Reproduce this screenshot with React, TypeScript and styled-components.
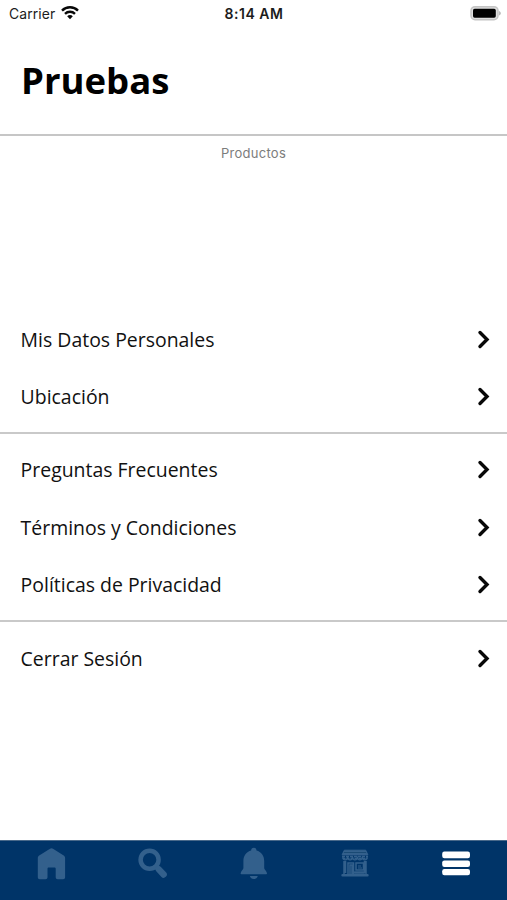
import React from "react";
import styled, { createGlobalStyle } from "styled-components";

const GlobalStyle = createGlobalStyle`
  *, *::before, *::after { box-sizing: border-box; }
  body { margin: 0; background: #fff; }
  button { border: 0; background: none; padding: 0; margin: 0; font: inherit; color: inherit; }
  svg { display: block; }
`;

const Screen = styled.div`
  width: 100%;
  height: 900px;
  display: flex;
  flex-direction: column;
  background: #fff;
  color: #111;
  font-family: "Open Sans", "Noto Sans", sans-serif;
  overflow: hidden;
`;

const StatusBar = styled.div`
  height: 26px;
  flex: none;
  display: grid;
  grid-template-columns: 1fr auto 1fr;
  align-items: center;
  padding: 0 6px 0 9px;
  font-family: Inter, sans-serif;
  color: #1c1c1c;
`;

const Carrier = styled.div`
  display: flex;
  align-items: center;
  gap: 6px;
  padding-top: 2px;
  font-size: 13.9px;
  letter-spacing: 0.1px;

  svg { margin-bottom: 2px; }
`;

const Clock = styled.div`
  font-size: 14px;
  font-weight: 600;
  letter-spacing: 0.5px;
  padding-right: 2px;
`;

const Battery = styled.div`
  justify-self: end;
`;

const Header = styled.header`
  flex: none;
  height: 110px;
  padding: 28px 21px 0;
  border-bottom: 2px solid #c6c6c6;
`;

const Title = styled.h1`
  margin: 0;
  font-size: 36.5px;
  line-height: 53px;
  font-weight: 700;
  color: #000;
`;

const Products = styled.section`
  flex: none;
  height: 175px;
  padding-top: 7px;
  text-align: center;
  font-family: Inter, sans-serif;
  font-size: 13px;
  line-height: 20px;
  letter-spacing: 0.28px;
  color: #7c7c7c;
`;

const Group = styled.section<{ $last?: boolean }>`
  flex: none;
  border-bottom: ${(p) => (p.$last ? "0" : "2px solid #c9c9c9")};
  padding-bottom: 6.5px;
  & + & { padding-top: 7.5px; }
`;

const Row = styled.button`
  width: 100%;
  height: 57.4px;
  padding: 0 15.5px 0 20.6px;
  display: flex;
  align-items: center;
  justify-content: space-between;
  text-align: left;
`;

const RowLabel = styled.span`
  font-size: 19.45px;
  line-height: 28px;
`;

const TabBar = styled.nav`
  flex: none;
  height: 60px;
  margin-top: auto;
  display: grid;
  grid-template-columns: repeat(5, 1fr);
  background: #003468;
  border-top: 1px solid #49698a;
`;

const Tab = styled.button<{ $active?: boolean }>`
  display: flex;
  justify-content: center;
  align-items: flex-start;
  padding: 6px 0 0;
  color: ${(p) => (p.$active ? "#fff" : "#33608c")};
`;

const Chevron = () => (
  <svg width="18" height="22" viewBox="0 0 18 22" fill="none">
    <path d="m6 3.5 7 7-7 7" stroke="#080808" strokeWidth="3.4" strokeLinecap="round" />
  </svg>
);

const WifiIcon = () => (
  <svg width="18" height="14" viewBox="0 0 18 14" fill="none" stroke="#080808" strokeWidth="2.4">
    <path d="M1 4.6C5.4.2 12.6.2 17 4.6M4 7.8c2.8-2.7 7.2-2.7 10 0" />
    <path d="M6.2 10.2c1.6-1.5 4-1.5 5.6 0L9 13.2Z" fill="#080808" stroke="none" />
  </svg>
);

const BatteryIcon = () => (
  <svg width="31" height="16" viewBox="0 0 31 16">
    <rect x="1" y="1.7" width="27" height="13" rx="4" fill="#dedede" stroke="#c4c4c4" strokeWidth="1.5" />
    <rect x="3" y="3.8" width="22.8" height="8.9" rx="1.6" fill="#000" />
    <path d="M29.2 5.9c2 1 2 3.6 0 4.6Z" fill="#aaa" />
  </svg>
);

const HomeIcon = () => (
  <svg width="30" height="34" viewBox="0 0 30 34" fill="currentColor">
    <path d="M15.5 1.2c.6 0 1 .2 1.5.5l10.3 6.5c1.2.7 1.8 1.5 1.8 2.8v19.2c0 1.2-.8 2-2 2h-5.4c-1.2 0-2-.8-2-2v-8.4c0-.8-.5-1.3-1.3-1.3h-5.6c-.8 0-1.3.5-1.3 1.3v8.4c0 1.2-.8 2-2 2H3.8c-1.2 0-2-.8-2-2V11c0-1.3.6-2.1 1.8-2.8L14 1.7c.5-.3.9-.5 1.5-.5Z" />
  </svg>
);

const SearchIcon = () => (
  <svg width="30" height="34" viewBox="0 0 30 34" fill="none" stroke="currentColor">
    <circle cx="12.6" cy="12.8" r="9" strokeWidth="4.5" />
    <path d="m19 19.5 3 3" strokeWidth="5" />
    <path d="m21.8 22.3 4.8 5.2" strokeWidth="6.4" strokeLinecap="round" />
  </svg>
);

const BellIcon = () => (
  <svg width="30" height="34" viewBox="0 0 30 34" fill="currentColor">
    <g transform="translate(.8 0)">
      <path d="M15 .8c1.7 0 2.7 1.1 2.7 2.8 4.7 1.3 7.7 5.2 7.7 10.4v7.2c0 1.4 2.8 3.2 2.8 5.2 0 .5-.3.8-.8.8H2.6c-.5 0-.8-.3-.8-.8 0-2 2.8-3.8 2.8-5.2V14c0-5.2 3-9.1 7.7-10.4C12.3 1.9 13.3.8 15 .8Z" />
      <path d="M11 29h8c-.6 1.8-2 3.1-4 3.1s-3.4-1.3-4-3.1Z" />
    </g>
  </svg>
);

const StoreIcon = () => (
  <svg width="30" height="34" viewBox="0 0 30 34" fill="none" stroke="currentColor">
    <path d="M4.3 3.2h21.4l2.2 4.7H2.1Z" fill="currentColor" />
    <path d="M4 5.5h22" stroke="#14456f" strokeWidth=".8" />
    <path d="M2 9.5h26M2.5 11.5h25" strokeWidth="1.3" strokeDasharray="3 1" />
    <path d="M2.8 9.5c0 4.5 4.8 4.5 4.8 0 0 4.5 4.9 4.5 4.9 0 0 4.5 4.9 4.5 4.9 0 0 4.5 4.9 4.5 4.9 0 0 4.5 4.9 4.5 4.9 0" strokeWidth="1.2" />
    <path d="M4 14v13M26 14v13M5.5 14v12M24.5 14v12M8 27V16h5.5v11M10 27v-9h2v9M16 16h7.5v7H16Z" strokeWidth="1.5" />
    <path d="M18 19h3M18 21h4" strokeWidth="1" />
    <path d="M2.5 28.3h25M15 25.5h9" strokeWidth="2.4" strokeLinecap="round" />
  </svg>
);

const MenuIcon = () => (
  <svg width="30" height="34" viewBox="0 0 30 34" fill="currentColor">
    <rect x="1.2" y="4.5" width="27.8" height="6.7" rx="2.2" />
    <rect x="1.2" y="13.4" width="27.8" height="6.5" rx="2.2" />
    <rect x="1.2" y="22" width="27.8" height="6.3" rx="2.2" />
  </svg>
);

const groups = [
  ["Mis Datos Personales", "Ubicación"],
  ["Preguntas Frecuentes", "Términos y Condiciones", "Políticas de Privacidad"],
  ["Cerrar Sesión"],
];

const tabs = [
  { name: "Inicio", Icon: HomeIcon },
  { name: "Buscar", Icon: SearchIcon },
  { name: "Notificaciones", Icon: BellIcon },
  { name: "Tienda", Icon: StoreIcon },
  { name: "Menú", Icon: MenuIcon },
];

export default function App() {
  return (
    <>
      <GlobalStyle />
      <Screen>
        <StatusBar>
          <Carrier>Carrier <WifiIcon /></Carrier>
          <Clock>8:14 AM</Clock>
          <Battery><BatteryIcon /></Battery>
        </StatusBar>
        <Header><Title>Pruebas</Title></Header>
        <Products>Productos</Products>
        {groups.map((items, i) => (
          <Group key={items[0]} $last={i === groups.length - 1}>
            {items.map((label) => (
              <Row key={label}>
                <RowLabel>{label}</RowLabel>
                <Chevron />
              </Row>
            ))}
          </Group>
        ))}
        <TabBar>
          {tabs.map(({ name, Icon }) => (
            <Tab key={name} aria-label={name} $active={name === "Menú"}><Icon /></Tab>
          ))}
        </TabBar>
      </Screen>
    </>
  );
}
